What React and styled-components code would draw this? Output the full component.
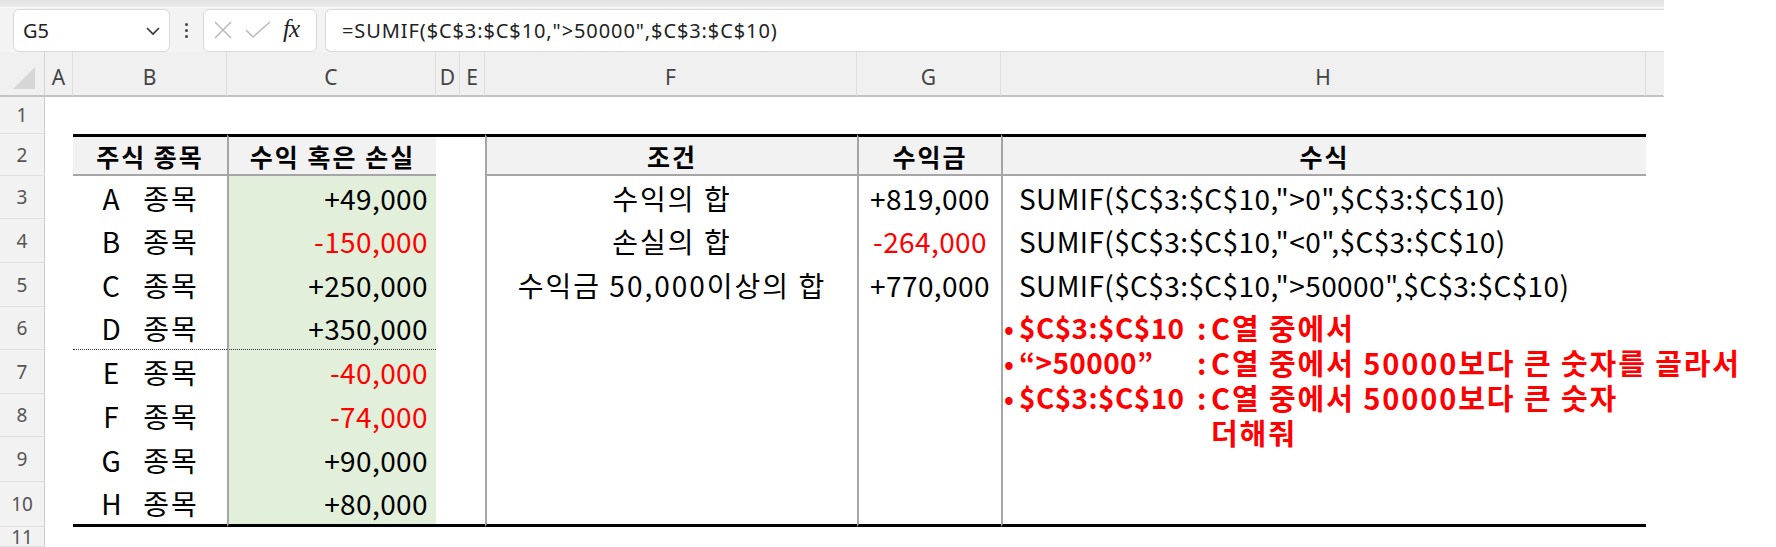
import styled, { createGlobalStyle } from "styled-components";

const GlobalStyle = createGlobalStyle`
  html, body {
    margin: 0;
    padding: 0;
    background: #ffffff;
    overflow: hidden;
  }
  body {
    font-family: "Noto Sans", "Noto Sans CJK KR", sans-serif;
  }
`;

const COLS = [
  { id: "A", w: 28 },
  { id: "B", w: 154 },
  { id: "C", w: 209 },
  { id: "D", w: 24 },
  { id: "E", w: 25 },
  { id: "F", w: 372 },
  { id: "G", w: 144 },
  { id: "H", w: 645 },
  { id: "", w: 18 },
];

const ROW_H = [37, 42, 43, 44, 44, 43, 44, 43, 45, 45, 20];

const STOCKS = [
  ["A", "+49,000"],
  ["B", "-150,000"],
  ["C", "+250,000"],
  ["D", "+350,000"],
  ["E", "-40,000"],
  ["F", "-74,000"],
  ["G", "+90,000"],
  ["H", "+80,000"],
];

const SUMMARY = [
  ["수익의 합", "+819,000", 'SUMIF($C$3:$C$10,">0",$C$3:$C$10)'],
  ["손실의 합", "-264,000", 'SUMIF($C$3:$C$10,"<0",$C$3:$C$10)'],
  ["수익금 50,000이상의 합", "+770,000", 'SUMIF($C$3:$C$10,">50000",$C$3:$C$10)'],
];

const HEADS = { B: "주식 종목", C: "수익 혹은 손실", F: "조건", G: "수익금", H: "수식" };

const NOTES = [
  ["$C$3:$C$10", "C열 중에서"],
  ["“>50000”", "C열 중에서 50000보다 큰 숫자를 골라서"],
  ["$C$3:$C$10", "C열 중에서 50000보다 큰 숫자"],
  ["", "더해줘"],
];

const isRed = (v) => v.startsWith("-");

function cellFor(r, col) {
  const p = {};
  let content = null;
  const tableCol = ["B", "C", "D", "E", "F", "G", "H"].includes(col);
  if (r === 2 && tableCol) p.$top = true;
  if (r === 10 && tableCol) p.$bottom = true;
  if (r >= 2 && r <= 10 && ["C", "F", "G", "H"].includes(col)) p.$divider = true;
  if (r === 6 && (col === "B" || col === "C")) p.$dotted = true;

  if (r === 2 && HEADS[col]) {
    p.$head = true;
    p.$ko = true;
    p.$align = "center";
    content = HEADS[col];
  }
  if (r >= 3 && r <= 10) {
    const s = STOCKS[r - 3];
    if (col === "B") {
      p.$align = "center";
      content = (
        <StockName>
          <span>{s[0]}</span>
          <span>종목</span>
        </StockName>
      );
    }
    if (col === "C") {
      p.$fill = true;
      p.$align = "right";
      p.$red = isRed(s[1]);
      content = s[1];
    }
    const sum = SUMMARY[r - 3];
    if (sum) {
      if (col === "F") {
        p.$align = "center";
        p.$ko = true;
        content = sum[0];
      }
      if (col === "G") {
        p.$align = "center";
        p.$red = isRed(sum[1]);
        content = sum[1];
      }
      if (col === "H") {
        p.$align = "left";
        content = sum[2];
      }
    }
  }
  return { p, content };
}

const App = () => {
  const rows = ROW_H.map((h, i) => i + 1);
  return (
    <>
      <GlobalStyle />
      <Window>
        <TopStrip />
        <Toolbar>
          <NameBox>
            <span>G5</span>
            <svg width="16" height="10" viewBox="0 0 16 10">
              <polyline points="2,2 8,8 14,2" fill="none" stroke="#333" strokeWidth="1.6" />
            </svg>
          </NameBox>
          <Dots>
            <i />
            <i />
            <i />
          </Dots>
          <FxBox>
            <svg width="20" height="18" viewBox="0 0 20 18">
              <path d="M2 1 L18 17 M18 1 L2 17" stroke="#b9b9b9" strokeWidth="1.5" fill="none" />
            </svg>
            <svg width="26" height="18" viewBox="0 0 26 18">
              <polyline points="1,9 8,16 25,1" stroke="#b9b9b9" strokeWidth="1.5" fill="none" />
            </svg>
            <FxLabel>fx</FxLabel>
          </FxBox>
          <FormulaBox>=SUMIF($C$3:$C$10,"&gt;50000",$C$3:$C$10)</FormulaBox>
        </Toolbar>
        <Sheet>
          <Grid $rows={ROW_H}>
            <Corner>
              <svg width="24" height="24" viewBox="0 0 24 24">
                <polygon points="23,1 23,23 1,23" fill="#d6d6d6" />
              </svg>
            </Corner>
            {COLS.map((c) => (
              <ColHead key={c.id || "x"} $last={!c.id}>
                {c.id}
              </ColHead>
            ))}
            {rows.map((r) => (
              <Row key={r} r={r} />
            ))}
          </Grid>
          <Notes>
            {NOTES.map(([label, text], i) => (
              <NoteLine key={i}>
                <NoteBullet>{label ? "•" : ""}</NoteBullet>
                <NoteLabel>{label}</NoteLabel>
                <NoteColon>{label ? ":" : ""}</NoteColon>
                <NoteText>{text}</NoteText>
              </NoteLine>
            ))}
          </Notes>
        </Sheet>
      </Window>
    </>
  );
};

const Row = ({ r }) => (
  <>
    <RowHead>{r}</RowHead>
    {COLS.map((c) => {
      const { p, content } = cellFor(r, c.id);
      return (
        <Cell key={c.id || "x"} {...p}>
          {content}
        </Cell>
      );
    })}
  </>
);

export default App;

const Window = styled.div`
  width: 1664px;
  background: #f3f3f3;
`;

const TopStrip = styled.div`
  height: 7px;
  background: linear-gradient(#e2e2e2, #ebebeb);
  border-bottom: 1px solid #f8f8f8;
`;

const Toolbar = styled.div`
  display: flex;
  align-items: center;
  height: 44px;
  padding-left: 13px;
  box-sizing: border-box;
  background: #f3f3f3;
`;

const Box = styled.div`
  height: 43px;
  box-sizing: border-box;
  background: #ffffff;
  border: 1px solid #d9d9d9;
  border-radius: 6px;
  display: flex;
  align-items: center;
`;

const NameBox = styled(Box)`
  width: 157px;
  justify-content: space-between;
  padding: 0 8px 0 9px;
  font-size: 20px;
  color: #222;
  svg {
    margin-top: 2px;
  }
`;

const Dots = styled.div`
  width: 33px;
  display: flex;
  flex-direction: column;
  align-items: center;
  gap: 3px;
  i {
    width: 3px;
    height: 3px;
    background: #444;
    border-radius: 50%;
  }
`;

const FxBox = styled(Box)`
  width: 114px;
  padding-left: 9px;
  gap: 12px;
`;

const FxLabel = styled.span`
  font-family: "Liberation Serif", "DejaVu Serif", serif;
  font-style: italic;
  font-size: 25px;
  color: #222;
  margin-top: -3px;
  letter-spacing: -1px;
`;

const FormulaBox = styled(Box)`
  margin-left: 8px;
  flex: 1;
  padding-left: 16px;
  font-size: 20px;
  letter-spacing: 0.9px;
  color: #222;
  border-radius: 6px 0 0 6px;
  border-right: none;
`;

const Sheet = styled.div`
  position: relative;
  background: #ffffff;
`;

const Grid = styled.div`
  display: grid;
  grid-template-columns: 45px ${COLS.map((c) => c.w + "px").join(" ")};
  grid-template-rows: 45px ${(p) => p.$rows.map((h) => h + "px").join(" ")};
`;

const Corner = styled.div`
  background: #f0f0f0;
  border-bottom: 2px solid #c3c3c3;
  border-right: 1px solid #d4d4d4;
  box-sizing: border-box;
  display: flex;
  align-items: flex-end;
  justify-content: flex-end;
  padding: 0 8px 5px 0;
`;

const ColHead = styled.div`
  background: #f0f0f0;
  border-bottom: 2px solid #c3c3c3;
  border-right: 1px solid ${(p) => (p.$last ? "transparent" : "#dddddd")};
  box-sizing: border-box;
  display: flex;
  align-items: center;
  justify-content: center;
  padding-top: 6px;
  font-size: 21px;
  color: #444;
`;

const RowHead = styled.div`
  background: #f2f2f2;
  border-bottom: 1px solid #e0e0e0;
  border-right: 1px solid #cccccc;
  box-sizing: border-box;
  display: flex;
  align-items: center;
  justify-content: center;
  font-size: 19px;
  color: #555;
`;

const Cell = styled.div`
  box-sizing: border-box;
  display: flex;
  align-items: center;
  justify-content: ${(p) =>
    p.$align === "right" ? "flex-end" : p.$align === "left" ? "flex-start" : "center"};
  padding: ${(p) => (p.$align === "right" ? "0 8px 0 0" : p.$align === "left" ? "0 0 0 16px" : "0")};
  white-space: nowrap;
  font-family: "Noto Sans CJK KR", sans-serif;
  font-size: ${(p) => (p.$head ? "25px" : "28px")};
  font-weight: ${(p) => (p.$head ? 700 : 400)};
  letter-spacing: ${(p) => (p.$ko ? "2px" : "0.4px")};
  color: ${(p) => (p.$red ? "#ff0000" : "#000")};
  background: ${(p) => (p.$head ? "#f2f2f2" : p.$fill ? "#e2efda" : "#fff")};
  border-top: ${(p) => (p.$top ? "3px solid #000" : "none")};
  border-bottom: ${(p) =>
    p.$bottom
      ? "3px solid #000"
      : p.$head
      ? "2px solid #a6a6a6"
      : p.$dotted
      ? "1px dotted #333"
      : "none"};
  border-left: ${(p) => (p.$divider ? "2px solid #a6a6a6" : "none")};
`;

const StockName = styled.div`
  display: flex;
  align-items: center;
  gap: 22px;
  span:first-child {
    width: 20px;
    text-align: center;
  }
  span:last-child {
    letter-spacing: 2px;
  }
`;

const Notes = styled.div`
  position: absolute;
  left: 1004px;
  top: 258px;
  display: grid;
  grid-template-columns: 15px 178px 14px auto;
  grid-auto-rows: 35px;
  align-items: center;
  line-height: 35px;
  font-family: "Noto Sans CJK KR", sans-serif;
  font-weight: 700;
  font-size: 29px;
  color: #ff0000;
  white-space: nowrap;
`;

const NoteLine = styled.div`
  display: contents;
`;

const NoteBullet = styled.span`
  font-weight: 700;
  font-size: 26px;
`;

const NoteLabel = styled.span`
  font-size: 28px;
  letter-spacing: 0.4px;
`;

const NoteColon = styled.span``;

const NoteText = styled.span`
  letter-spacing: 1.9px;
`;
